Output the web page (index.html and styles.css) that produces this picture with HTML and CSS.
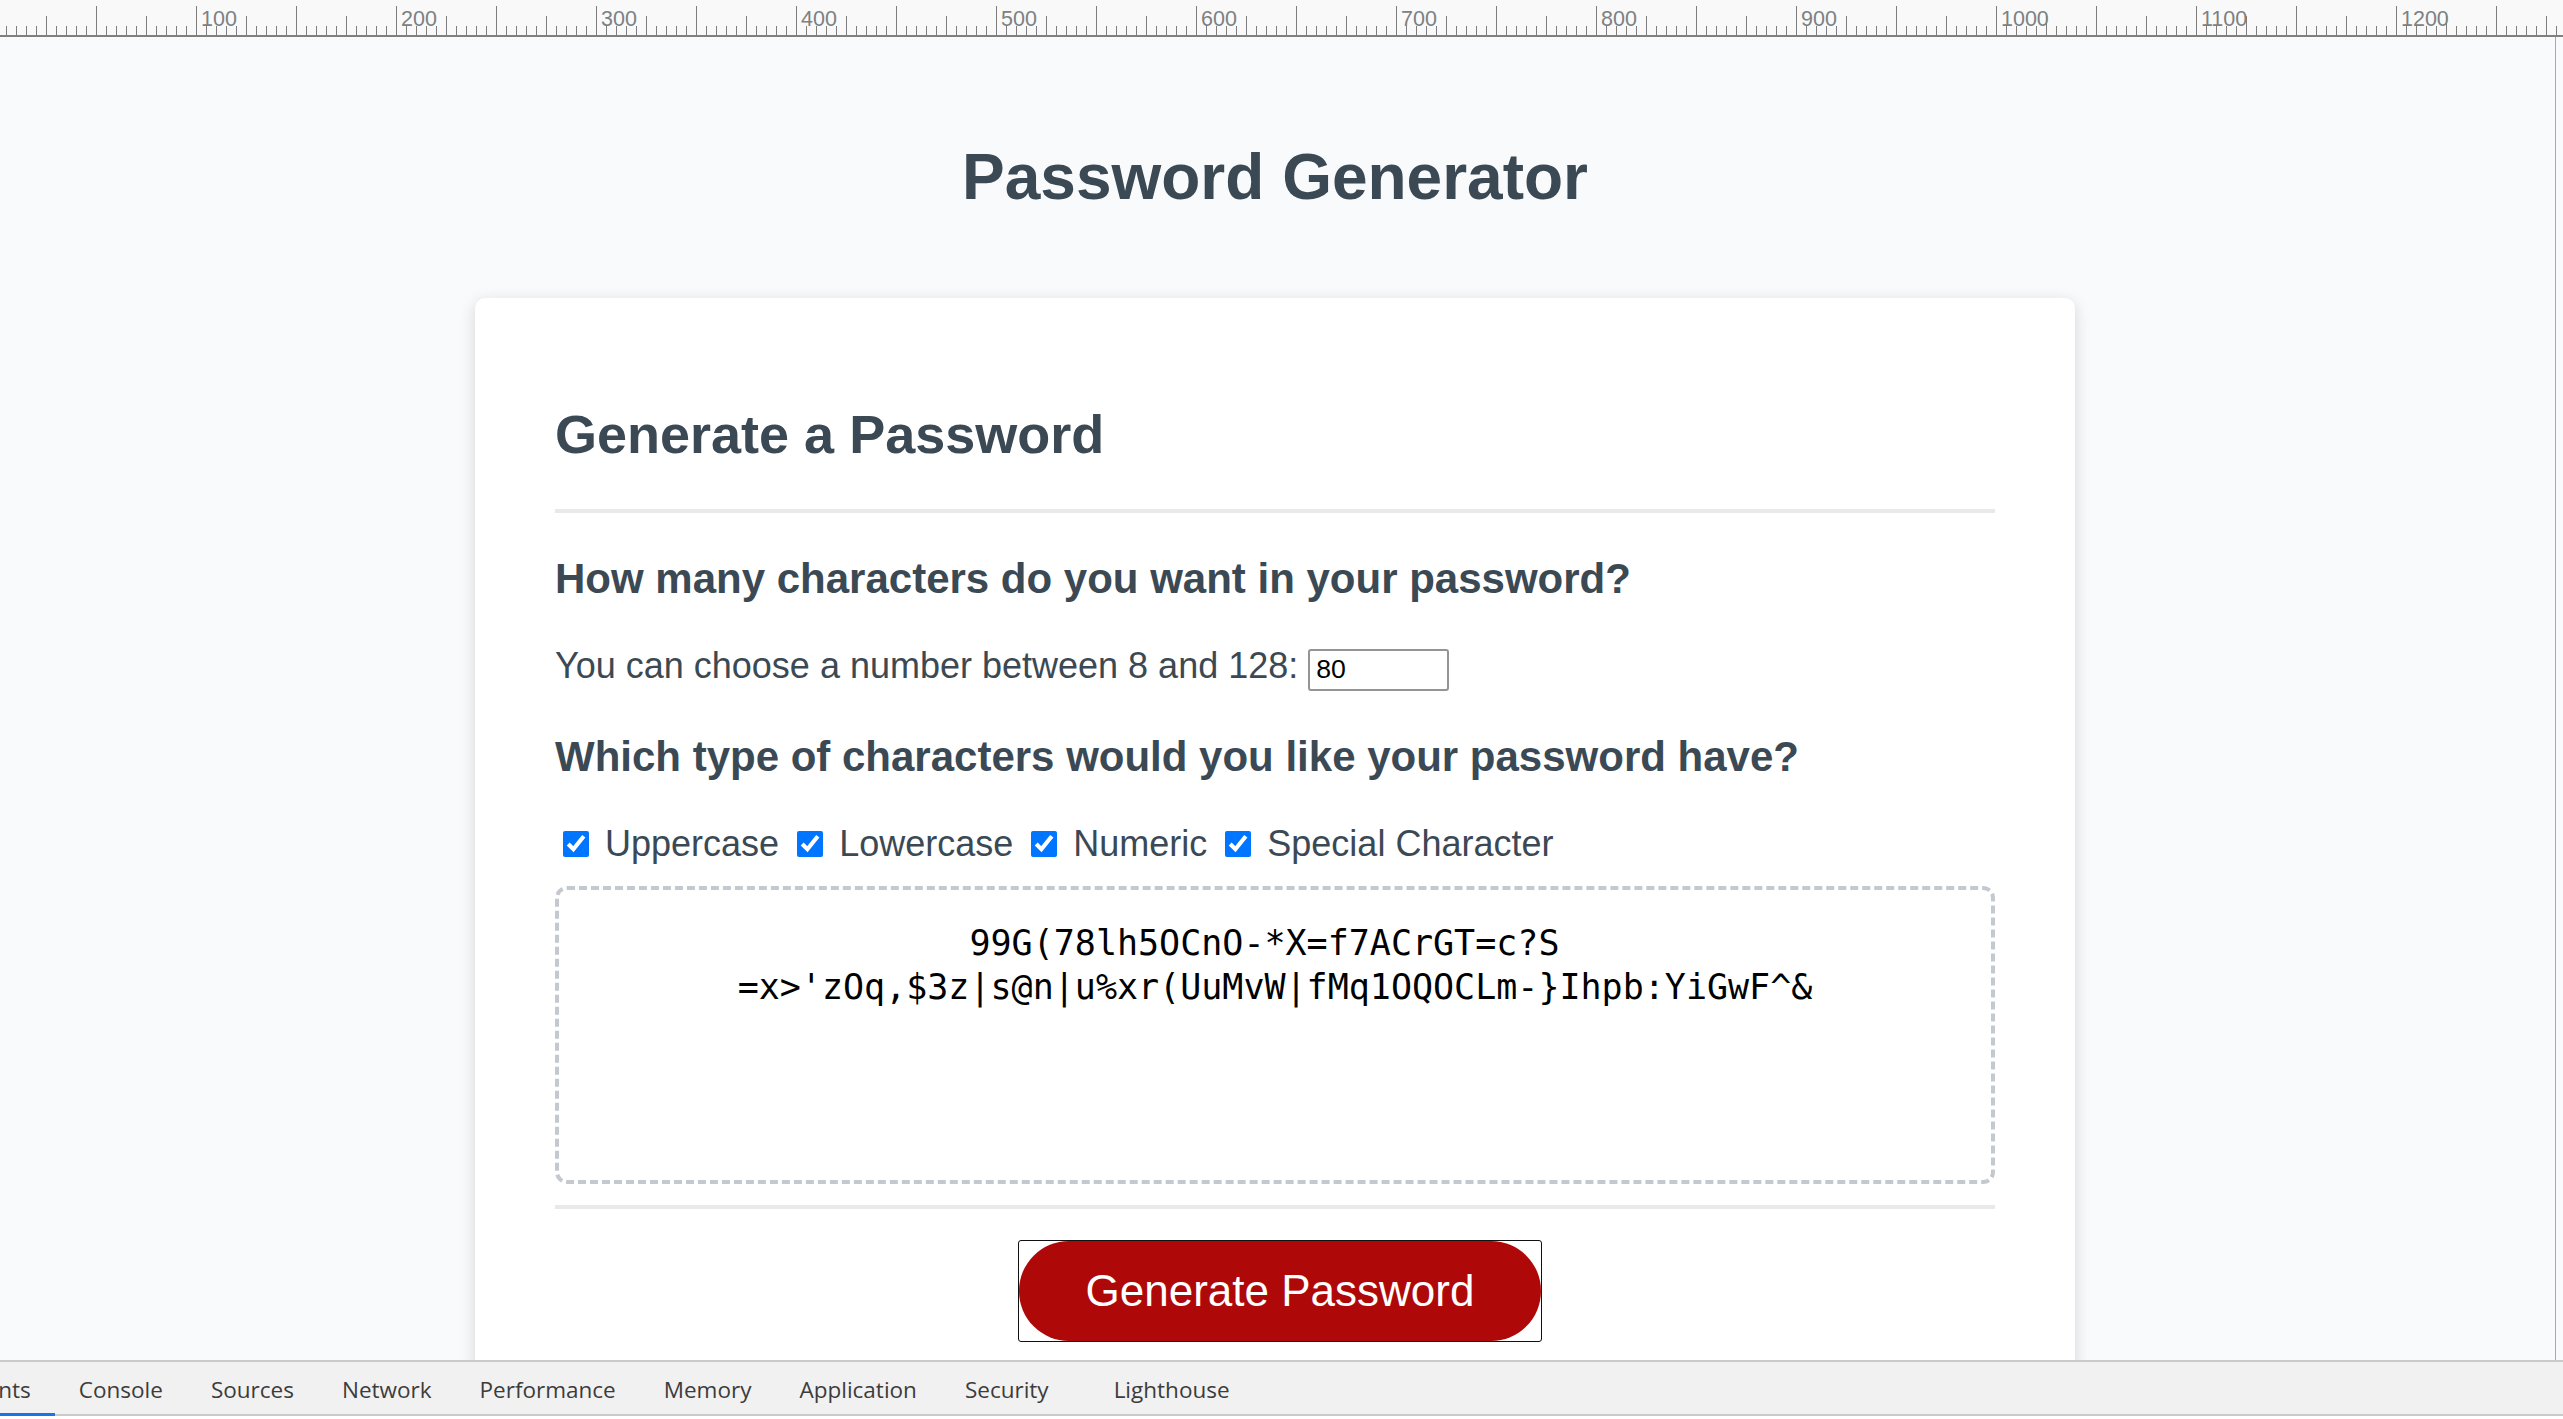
FILE: index.html
```html
<!DOCTYPE html>
<html lang="en">
<head>
<meta charset="UTF-8">
<title>Password Generator</title>
<link rel="stylesheet" href="styles.css">
</head>
<body>
  <div class="ruler">
    <div class="ruler-labels">
      <span>100</span><span>200</span><span>300</span><span>400</span><span>500</span><span>600</span><span>700</span><span>800</span><span>900</span><span>1000</span><span>1100</span><span>1200</span>
    </div>
  </div>
  <div class="viewport">
    <div class="wrapper">
      <header class="page-header">
        <h1>Password Generator</h1>
      </header>
      <div class="card">
        <div class="card-header">
          <h2>Generate a Password</h2>
        </div>
        <div class="card-body">
          <h3>How many characters do you want in your password?</h3>
          <p class="length-row">You can choose a number between 8 and 128: <input class="length-input" type="number" value="80"></p>
          <h3>Which type of characters would you like your password have?</h3>
          <div class="types">
            <input type="checkbox" checked> <label>Uppercase</label>
            <input type="checkbox" checked> <label>Lowercase</label>
            <input type="checkbox" checked> <label>Numeric</label>
            <input type="checkbox" checked> <label>Special Character</label>
          </div>
          <textarea class="output" readonly>99G(78lh5OCnO-*X=f7ACrGT=c?S =x&gt;'zOq,$3z|s@n|u%xr(UuMvW|fMq1OQOCLm-}Ihpb:YiGwF^&amp;</textarea>
        </div>
        <div class="card-footer">
          <div class="footer-row">
            <span class="focus-ring"><button class="btn">Generate Password</button></span>
          </div>
        </div>
      </div>
    </div>
  </div>
  <div class="devtools">
    <nav class="tabs">
      <span class="tab active">Elements</span>
      <span class="tab">Console</span>
      <span class="tab">Sources</span>
      <span class="tab">Network</span>
      <span class="tab">Performance</span>
      <span class="tab">Memory</span>
      <span class="tab">Application</span>
      <span class="tab">Security</span>
      <span class="tab spaced">Lighthouse</span>
    </nav>
  </div>
  <div class="devtools-bottom"></div>
</body>
</html>
```
FILE: styles.css
```css
* {
  box-sizing: border-box;
}

html,
body {
  margin: 0;
  padding: 0;
}

body {
  height: 1419px;
  overflow: hidden;
  display: flex;
  flex-direction: column;
  background: #f9fafc;
  font-family: "Liberation Sans", Arial, sans-serif;
}

/* ---------- ruler ---------- */
.ruler {
  flex: none;
  height: 37px;
  border-bottom: 2px solid #808080;
  background-color: #f9f9f9;
  background-image:
    linear-gradient(90deg, #7d7d7d 1px, transparent 1px),
    linear-gradient(90deg, #7d7d7d 1px, transparent 1px),
    linear-gradient(90deg, #7d7d7d 1px, transparent 1px);
  background-size: 100px 29px, 50px 19px, 10px 9px;
  background-position: 96px 6px, 46px 16px, 6px 26px;
  background-repeat: repeat-x;
  overflow: hidden;
}

.ruler-labels {
  display: flex;
  margin-left: 196px;
  padding-top: 9px;
}

.ruler-labels span {
  flex: none;
  width: 200px;
  padding-left: 5px;
  font-family: "Liberation Sans", Arial, sans-serif;
  font-size: 21.5px;
  line-height: 21px;
  color: #808080;
}

/* ---------- page viewport ---------- */
.viewport {
  flex: 1;
  min-height: 0;
  overflow: hidden;
  margin-right: 7px;
  border-right: 1px solid #a9a9a9;
}

.wrapper {
  padding: 60px 45px 0 40px;
}

.page-header {
  text-align: center;
  padding: 0 40px 41px;
  color: #3b4954;
}

.page-header h1 {
  margin: 43px 0;
  font-size: 64px;
  line-height: 74px;
  font-weight: bold;
}

.card {
  max-width: 1600px;
  margin: 0 auto;
  background: #fff;
  border-radius: 10px;
  box-shadow: rgba(0, 0, 0, 0.15) 0 4px 16px 0;
  color: #3b4954;
  font-size: 36px;
  padding: 60px 80px;
}

.card-header h2 {
  margin: 45px 0 44px;
  font-size: 54px;
  line-height: 62px;
  font-weight: bold;
}

.card-header::after {
  content: "";
  display: block;
  height: 4px;
  background: #e7e9eb;
}

.card-body h3 {
  margin: 42px 0;
  font-size: 42px;
  line-height: 48px;
  font-weight: bold;
}

.length-row {
  margin: 0;
  line-height: 41px;
}

.length-input {
  width: 141px;
  height: 42px;
  padding: 0 6px;
  border: 2px solid #949494;
  border-radius: 3px;
  font-family: "Liberation Sans", Arial, sans-serif;
  font-size: 26.67px;
  color: #000;
  background: #fff;
  vertical-align: baseline;
}

.types {
  line-height: 41px;
}

.types input {
  width: 26px;
  height: 26px;
  margin: 0 6px 0 8px;
  vertical-align: -1px;
}

.output {
  display: block;
  width: 100%;
  height: 298px;
  margin: 22px 0 0;
  padding: 31px 40px;
  border: 4px dashed #c4c9cf;
  border-radius: 12px;
  background: #fff;
  font-family: "DejaVu Sans Mono", "Liberation Mono", monospace;
  font-size: 35px;
  line-height: 44px;
  color: #000;
  text-align: center;
  white-space: break-spaces;
  resize: none;
  overflow: hidden;
}

.card-footer {
  margin-top: 21px;
}

.card-footer::before {
  content: "";
  display: block;
  height: 4px;
  background: #e7e9eb;
}

.footer-row {
  display: flex;
  justify-content: center;
  padding: 31px 0 32px;
}

.focus-ring {
  display: block;
  margin: 0 28px 0 38px;
  border: 1px solid #111;
  border-radius: 3px;
}

.btn {
  display: block;
  margin: 0;
  border: none;
  background: #af0808;
  border-radius: 50px;
  color: #fff;
  font-family: "Liberation Sans", Arial, sans-serif;
  font-size: 44px;
  line-height: 44px;
  padding: 28px 67px;
  text-align: center;
  cursor: pointer;
}

/* ---------- devtools strip ---------- */
.devtools {
  flex: none;
  height: 56px;
  border-top: 2px solid #cacaca;
  background: #f1f1f1;
  box-shadow: inset 0 -2px #cacaca;
  overflow: hidden;
  font-family: "Open Sans", "Noto Sans", sans-serif;
  font-size: 22.5px;
  color: #3c3c3c;
}

.tabs {
  display: flex;
  height: 100%;
  margin-left: -90px;
}

.tab {
  flex: none;
  padding: 2px 24px 0;
  line-height: 52px;
  white-space: nowrap;
}

.tab.active {
  box-shadow: inset 0 -3px #1a73e8;
}

.tab.spaced {
  margin-left: 17px;
}

.devtools-bottom {
  flex: none;
  height: 3px;
  background: #fff;
}
```
